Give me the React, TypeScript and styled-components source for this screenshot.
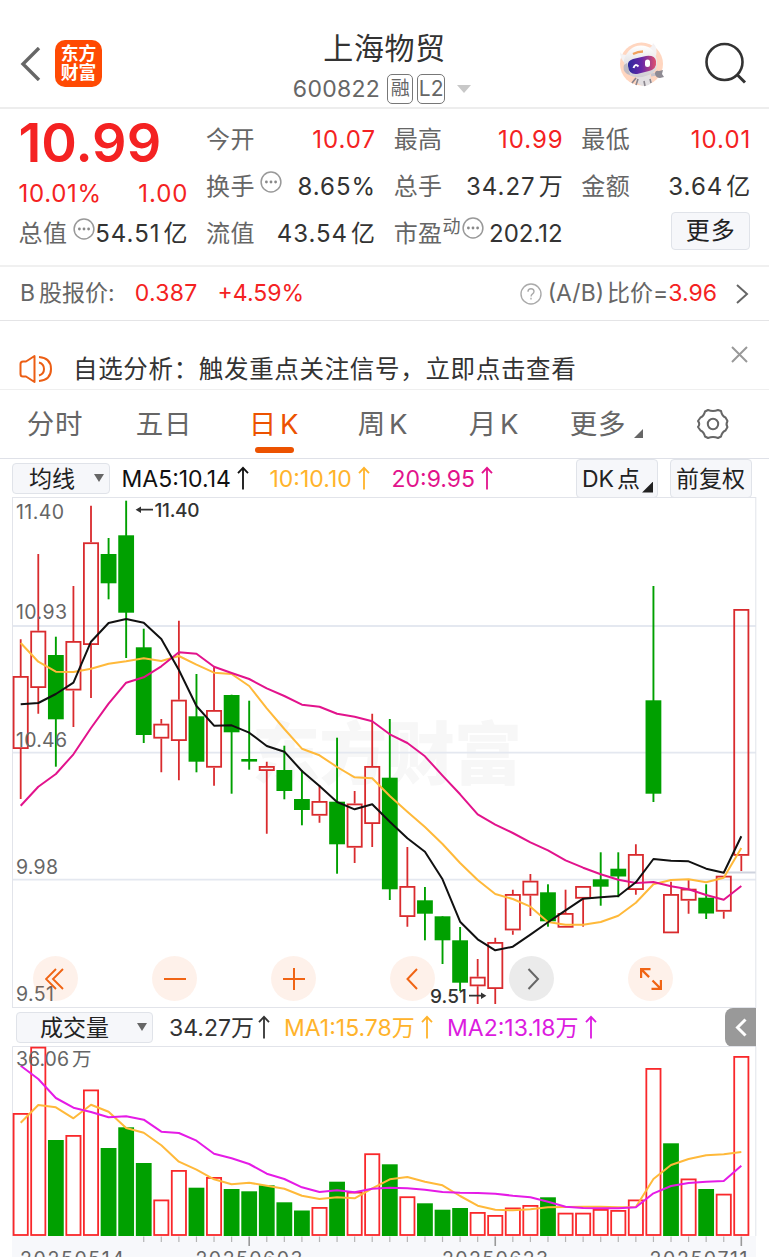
import styled, { createGlobalStyle } from 'styled-components'

const GlobalStyle = createGlobalStyle`
  * {
    box-sizing: border-box;
  }

  body {
    margin: 0;
    background: #fff;
    color: #333;
    font-family: Inter, 'Noto Sans CJK SC', sans-serif;
    overflow: hidden;
  }
`

const Page = styled.div`
  width: 769px;
  height: 1257px;
  overflow: hidden;
  display: flex;
  flex-direction: column;
`

const Text = styled.span<{ $size?: number; $color?: string; $weight?: number; $gap?: number }>`
  font-size: ${({ $size }) => $size ?? 24}px;
  color: ${({ $color }) => $color ?? '#333'};
  font-weight: ${({ $weight }) => $weight ?? 400};
  letter-spacing: ${({ $gap }) => $gap ?? 0}px;
  line-height: 1;
  white-space: nowrap;
`

// quote numbers, the trailing letter space is pulled back so they end on the column edge
const Value = styled.span<{ $up?: boolean }>`
  font-size: 24px;
  letter-spacing: 1px;
  margin-right: -1px;
  line-height: 1;
  white-space: nowrap;
  color: ${({ $up }) => ($up ? '#f42222' : '#333')};
`

// small break between latin and chinese glyphs
const Thin = styled.span<{ $w?: number }>`
  margin-left: ${({ $w }) => $w ?? 3}px;
`

/* header */

const Header = styled.header`
  height: 109px;
  flex: none;
  display: grid;
  grid-template-columns: 250px 1fr 250px;
  padding-top: 30px;
  border-bottom: 2px solid #ededed;
`

const HeaderLeft = styled.div`
  display: flex;
  align-items: flex-start;
  padding: 10px 0 0 20px;
  gap: 14px;

  svg {
    margin-top: 7px;
  }
`

const Logo = styled.div`
  width: 47px;
  height: 47px;
  border-radius: 10px;
  background: #ff4a03;
  color: #fff;
  font-size: 17.8px;
  font-weight: 700;
  line-height: 19px;
  text-align: center;
  padding-top: 4px;
`

const HeaderTitle = styled.div`
  display: flex;
  flex-direction: column;
  align-items: center;
  padding-top: 3px;
`

const CodeRow = styled.div`
  display: flex;
  align-items: center;
  height: 30px;
  margin-top: 11px;
  margin-left: -5px;
`

const Badge = styled.span`
  height: 30px;
  width: ${({ children }) => (children === 'L2' ? 28 : 26)}px;
  border: 1.5px solid #777;
  border-radius: 5px;
  color: #666;
  font-size: ${({ children }) => (children === 'L2' ? 21 : 19)}px;
  line-height: 28px;
  text-align: center;
  margin-left: 4px;
`

const DownTriangle = styled.i<{ $w: number; $h: number; $color: string }>`
  border: ${({ $w }) => $w / 2}px solid transparent;
  border-top: ${({ $h, $color }) => `${$h}px solid ${$color}`};
  border-bottom: 0;
`

const HeaderRight = styled.div`
  display: flex;
  justify-content: flex-end;
  align-items: flex-start;
  padding: 11px 22px 0 0;
  gap: 38px;
`

/* quote */

const Quote = styled.section`
  height: 158px;
  flex: none;
  display: grid;
  grid-template-columns: repeat(4, 169px);
  column-gap: 18.6px;
  padding: 8px 0 0 18.5px;
  border-bottom: 2px solid #f0f0f0;
`

const Column = styled.div`
  display: flex;
  flex-direction: column;
`

const Cell = styled.div<{ $height?: number }>`
  height: ${({ $height }) => $height ?? 46.7}px;
  flex: none;
  display: flex;
  align-items: center;
  justify-content: space-between;
`

const Label = styled.span`
  display: flex;
  align-items: center;
  font-size: 24px;
  letter-spacing: 0.4px;
  line-height: 1;
  color: #666;

  svg {
    margin: -11px 0 0 5.5px;
  }
`

const Sup = styled.sup`
  font-size: 18px;
  line-height: 1;
  margin-top: -14px;
  vertical-align: baseline;

  & + svg {
    margin-left: 1.5px;
  }
`

const MoreButton = styled.button`
  width: 79px;
  height: 38px;
  margin: 0 0 5px auto;
  border: 1.5px solid #e0e3e9;
  border-radius: 4px;
  background: #f6f7fa;
  color: #222;
  font: 24px Inter, 'Noto Sans CJK SC', sans-serif;
  letter-spacing: 1px;
  line-height: 34px;
  padding: 0;
`

/* rows under the quote */

const ShareRow = styled.div`
  height: 54px;
  flex: none;
  display: flex;
  align-items: center;
  padding: 0 20px;
  border-bottom: 1px solid #e4e4e6;
`

const Spacer = styled.div`
  flex: 1;
`

const Notice = styled.div`
  height: 69px;
  flex: none;
  display: flex;
  align-items: flex-start;
  padding: 25px 21px 0 19px;
  border-bottom: 1.5px solid #efefef;

  ${Text} {
    margin: 11px 0 0 21px;
  }
`

const Tabs = styled.nav`
  height: 69px;
  flex: none;
  display: flex;
  border-bottom: 1.5px solid #dfe1e8;
`

const Tab = styled.div<{ $left: number; $active?: boolean }>`
  width: 56px;
  margin-left: ${({ $left }) => $left}px;
  display: flex;
  flex-direction: column;
  align-items: center;
  padding-top: 21px;
  font-size: 27.5px;
  letter-spacing: 0.8px;
  line-height: 27px;
  white-space: nowrap;
  color: ${({ $active }) => ($active ? '#ec5200' : '#666')};

  &:after {
    content: '';
    width: 39px;
    height: 6px;
    margin-top: 9px;
    border-radius: 3px;
    background: ${({ $active }) => ($active ? '#ec5200' : 'transparent')};
  }
`

const Corner = styled.i<{ $size: number; $color: string }>`
  width: ${({ $size }) => $size}px;
  height: ${({ $size }) => $size}px;
  background: ${({ $color }) => $color};
  clip-path: polygon(100% 0, 100% 100%, 0 100%);
`

/* indicator bars */

const IndicatorBar = styled.div<{ $pad: number }>`
  height: 38px;
  flex: none;
  display: flex;
  align-items: center;
  padding-left: ${({ $pad }) => $pad}px;

  ${Text} {
    padding-top: 2px;
  }
`

const Select = styled.div<{ $width: number; $pad: number }>`
  width: ${({ $width }) => $width}px;
  height: 31px;
  padding: 0 5px 0 ${({ $pad }) => $pad}px;
  margin-right: 11.5px;
  display: flex;
  align-items: center;
  justify-content: space-between;
  border: 1.5px solid #e0e3e9;
  border-radius: 4px;
  background: #f6f7fa;
`

const Legend = styled.div<{ $width: number }>`
  width: ${({ $width }) => $width}px;
  display: flex;
  align-items: center;
  gap: 6px;
`

const Chip = styled.div<{ $width: number }>`
  width: ${({ $width }) => $width}px;
  height: 39px;
  margin-right: 12px;
  padding-left: 5px;
  display: flex;
  align-items: center;
  border: 1.5px solid #e0e3e9;
  border-radius: 4px;
  background: #f6f7fa;

  ${Corner} {
    align-self: flex-end;
    margin: 0 0 4px 2px;
  }
`

const Drawer = styled.div`
  width: 31px;
  height: 39px;
  margin-left: auto;
  margin-right: 13px;
  border-radius: 8px 0 0 8px;
  background: #999;
  display: flex;
  align-items: center;
  justify-content: center;
`

/* charts */

const ChartBox = styled.div<{ $height: number }>`
  position: relative;
  height: ${({ $height }) => $height}px;
  flex: none;
  padding-left: 12px;

  svg {
    display: block;
  }
`

const Controls = styled.div`
  position: absolute;
  left: 33px;
  bottom: 7px;
  display: flex;
  gap: 74.1px;
`

const RoundButton = styled.div<{ $muted?: boolean }>`
  width: 45px;
  height: 45px;
  border-radius: 50%;
  display: flex;
  align-items: center;
  justify-content: center;
  color: ${({ $muted }) => ($muted ? '#666' : '#f06414')};
  background: ${({ $muted }) => ($muted ? 'rgba(90, 90, 90, 0.12)' : 'rgba(248, 100, 20, 0.09)')};
`

const UpArrow = ({ color }: { color: string }) => (
  <svg width="12" height="24" viewBox="0 0 12 24" fill="none" stroke={color} strokeWidth="1.8">
    <path d="M6 23.500V2M1 7.200 6 1.800l5 5.400" />
  </svg>
)

const Dots = () => (
  <svg width="22" height="22" viewBox="0 0 22 22" fill="none" stroke="#999" strokeWidth="1.5">
    <circle cx="11" cy="11" r="9.9" />
    <g fill="#888" stroke="none">
      <circle cx="6.4" cy="11" r="1.4" />
      <circle cx="11" cy="11" r="1.4" />
      <circle cx="15.6" cy="11" r="1.4" />
    </g>
  </svg>
)

const Robot = () => (
  <svg width="46" height="46" viewBox="0 0 46 46">
    <defs>
      <linearGradient id="visor" x1="0" y1="0" x2="1" y2="0">
        <stop offset="0" stopColor="#2b2a9c" />
        <stop offset="0.5" stopColor="#6a27a8" />
        <stop offset="1" stopColor="#e0506c" />
      </linearGradient>
      <linearGradient id="shell" x1="0" y1="0" x2="0" y2="1">
        <stop offset="0" stopColor="#ffffff" />
        <stop offset="1" stopColor="#cfcdd2" />
      </linearGradient>
    </defs>
    <circle cx="22.500" cy="23" r="21.5" fill="#ffd6c0" />
    <path d="M18 35l-1 5q4 5 8 5 5 0 8-4l-2-7z" fill="#e2dfe2" />
    <path d="M17 37l-4 5M19 38l-2 6M25 40l1 5M31 38l1 4" stroke="#8a858d" strokeWidth="1.6" />
    <path d="M32 34l6-1" stroke="#c9c5cc" strokeWidth="3" />
    <path d="M36 33q0-4 4-3l4-1-1 4 2 3-4 1q-4 0-5-4z" fill="#8f8b93" />
    <path d="M29 7q4 0 5-5 5 5 3 13zM8 14Q2 14 1 11q0 7 5 11z" fill="#f4f2f4" />
    <path d="M5 19Q9 5 22 4.500q13 0 16 15 1 11-7 14-12 5-20 1-6-4-6-15.500z" fill="url(#shell)" />
    <path d="M5 24q-2 5 3 9l3 1-3-12z" fill="#bdbac3" />
    <path d="M9 25q-1-5 5-7l13-3q9-1 10 5 1 8-7 10l-12 3q-8 1-9-8z" fill="url(#visor)" />
    <path d="M14.500 27q1.500-5 5-1.500" stroke="#fff" strokeWidth="2" fill="none" />
    <rect x="26" y="18.500" width="5" height="7.5" rx="2.5" fill="#fff" />
    <path d="M14 13q5-2.500 10-2.500" stroke="#f0a15e" strokeWidth="2.4" fill="none" />
  </svg>
)

const X0 = 20.7
const STEP = 17.576
const xAt = (i: number) => X0 + i * STEP

// [up, high, body top, body bottom, low]
const candles: [number, number, number, number, number][] = [
  [1, 639.3, 676, 749, 799], [1, 554, 630.7, 688, 713.7], [0, 636.7, 655, 719.3, 766.7],
  [1, 586, 641, 690.5, 727], [1, 505.7, 542.3, 645, 698], [0, 538, 554, 583.3, 599.3],
  [0, 500.7, 535.3, 612.7, 658], [0, 628.7, 647.3, 735, 743], [1, 719, 723.7, 738.6, 772.3],
  [1, 620.7, 699.7, 741, 780.3], [0, 674, 716.3, 761.7, 772.3], [1, 666.7, 710, 767.7, 785.7],
  [0, 694.7, 695, 732.3, 793.7], [0, 700.7, 759, 761.6, 769.7], [1, 761.7, 766, 771, 833.7],
  [0, 745.7, 770, 791, 799.3], [0, 770, 799, 810, 825.3], [1, 785.3, 801, 815.7, 822.7],
  [0, 737.7, 801.7, 844.3, 873.7], [1, 791, 803.5, 847.7, 863], [1, 713.7, 766, 824, 847],
  [0, 719, 777.7, 889.3, 900], [1, 847, 886, 917, 926.7], [0, 887, 900.3, 913.7, 940.3],
  [0, 916.3, 916.3, 940.3, 964], [0, 927, 940.3, 982.7, 991], [1, 959, 976.7, 986.3, 1004],
  [1, 937.7, 942, 989, 1004], [1, 889.7, 894, 930.4, 934.7], [1, 874, 880.7, 895.6, 916],
  [0, 884.3, 892.3, 921.3, 926.7], [1, 889.7, 913, 927.7, 927.7], [1, 886, 886, 898.7, 926.7],
  [0, 852.3, 879.3, 886.7, 905.7], [0, 852.3, 868.7, 876.5, 897.3], [1, 844.3, 854, 890, 894.7],
  [0, 586, 700.3, 793.7, 802], [1, 881.7, 894, 933.3, 933.3], [1, 880, 888.7, 900.7, 913.7],
  [0, 884.3, 897.7, 913.5, 919], [1, 875.7, 875.7, 911.7, 918.7], [1, 609, 609, 855.8, 871],
]

const ma5 = [
  704.3, 703, 694, 682.7, 641.7, 623, 619, 622.7, 639, 670, 706, 725.7, 725.3, 732.7, 746, 751.7, 771, 786, 802,
  809.3, 804.3, 821.7, 838.3, 851.7, 879.3, 921.7, 939.3, 950.3, 946.7, 934.7, 922.3, 910.3, 898.7, 897.3, 896,
  882.3, 859, 860.7, 861.3, 868.7, 872.7, 836.3,
]
const ma10 = [
  643, 661.7, 671.7, 672, 668.7, 663.7, 661.3, 658.3, 661, 656, 664.7, 672.7, 674, 686, 708.3, 729, 748.7, 755.3,
  767, 777.3, 778.3, 796, 811.7, 827, 844, 863, 880, 894, 899, 906.7, 922, 924.7, 924.7, 922, 915.7, 902.7, 884.3,
  880, 879.3, 882.3, 877.7, 848,
]
const ma20 = [
  805.7, 786.7, 774, 754.3, 728, 703.7, 682.7, 677.3, 666.3, 652.3, 653.7, 666.7, 673, 679, 688.3, 696, 704.7,
  706.7, 713.7, 716.7, 721.3, 734.3, 743, 756.3, 775.7, 794.3, 814.3, 824.7, 833, 842.3, 850.3, 860.3, 867.7,
  874.3, 879.7, 883, 882, 886.3, 889.3, 895, 899.7, 886,
]

// [up, bar top]
const volumes: [number, number][] = [
  [1, 1113], [1, 1046.7], [0, 1140], [1, 1135], [1, 1089.5], [0, 1148], [0, 1127.3], [0, 1163], [1, 1199.5],
  [1, 1170], [0, 1187.7], [1, 1177], [0, 1189], [0, 1191.3], [0, 1185.3], [0, 1202.3], [0, 1210.5], [1, 1207],
  [0, 1181.7], [1, 1191.7], [1, 1153.3], [0, 1164.3], [1, 1196.3], [0, 1203.3], [0, 1209.7], [0, 1208],
  [1, 1212], [1, 1215], [1, 1207.5], [1, 1205], [0, 1197.3], [1, 1212.7], [1, 1212.7], [1, 1209], [1, 1210],
  [1, 1199.5], [1, 1068], [0, 1143.3], [1, 1178.5], [0, 1189], [1, 1193.7], [1, 1056],
]
const volMa1 = [
  1122.7, 1105, 1107.3, 1118.3, 1104.7, 1111.7, 1128, 1132.7, 1145.3, 1161.7, 1169.7, 1179.3, 1184.3, 1182.7,
  1185.7, 1188.7, 1195.7, 1199, 1197.3, 1198.3, 1188.3, 1179.3, 1177, 1181.7, 1185.3, 1196, 1205.7, 1209.7,
  1210.3, 1209.3, 1207.3, 1207, 1206.7, 1206.7, 1207.3, 1207, 1179, 1165, 1159, 1155.3, 1154.3, 1152,
]
const volMa2 = [
  1065.7, 1079, 1098, 1107.7, 1112, 1117.3, 1116.3, 1119.7, 1131.7, 1133, 1140.7, 1153.7, 1158.3, 1164, 1173.7,
  1179, 1187.3, 1192, 1190.3, 1192.3, 1188.7, 1187.7, 1188.3, 1189.7, 1192, 1192.7, 1193, 1193.7, 1195.7, 1197.3,
  1201.7, 1206.7, 1208, 1208.3, 1208.3, 1207.3, 1193.3, 1186, 1183, 1181.7, 1181, 1165.7,
]

const GREEN = '#00a000'
const RED = '#f42222'
const ORANGE = '#ffb32b'

const Line = ({ data, color }: { data: number[]; color: string }) => (
  <polyline
    points={data.map((y, i) => `${xAt(i)},${y}`).join(' ')}
    fill="none"
    stroke={color}
    strokeWidth="2"
    strokeLinejoin="round"
  />
)

const CandleChart = () => (
  <svg width="745" height="511" viewBox="12 497 745 511">
    <text x="252" y="779" fontSize="68" fontWeight="900" fill="#f7f7f7" textLength="270">东方财富</text>
    <path d="M12.5 626H756M12.5 752.7H756M12.5 879.7H756" stroke="#e4e8f0" strokeWidth="1.8" />
    <path d="M726 872.5H756" stroke="#cfd3de" strokeWidth="2" />
    <rect x="12.5" y="497.5" width="743.3" height="510" fill="none" stroke="#e2e4ea" />
    {candles.map(([up, high, top, bottom, low], i) => {
      const x = xAt(i)
      return up ? (
        <g key={i} stroke="#d92b2e" strokeWidth="1.8" fill="none">
          <path d={`M${x} ${high}V${top}M${x} ${bottom}V${low}`} />
          <rect x={x - 7.1} y={top + 0.9} width="14.2" height={bottom - top - 1.8} />
        </g>
      ) : (
        <g key={i} fill={GREEN}>
          <rect x={x - 0.95} y={high} width="1.9" height={low - high} />
          <rect x={x - 7.9} y={top} width="15.8" height={bottom - top} />
        </g>
      )
    })}
    <Line data={ma10} color="#ffb93a" />
    <Line data={ma20} color="#e2138c" />
    <Line data={ma5} color="#111" />
    <g fill="#666" fontSize="19.5">
      <text x="16" y="519" textLength="48">11.40</text>
      <text x="16" y="619" textLength="51">10.93</text>
      <text x="16" y="746.5" textLength="51">10.46</text>
      <text x="16" y="873.5" textLength="42">9.98</text>
      <text x="16" y="1001" textLength="38">9.51</text>
    </g>
    <g fill="#333" fontSize="19" fontWeight="500">
      <text x="154.500" y="516.5" textLength="45">11.40</text>
      <text x="430" y="1003" textLength="37">9.51</text>
      <path d="M153 509.7H138M469 995.7H483" stroke="#333" strokeWidth="1.8" fill="none" />
      <path d="M141 506.5v6.4l-5.4-3.2zM481 992.5v6.4l5.4-3.2z" />
    </g>
  </svg>
)

const VolumeChart = () => (
  <svg width="745" height="211" viewBox="12 1046 745 211">
    <rect x="12" y="1236" width="744" height="21" fill="#f7f8fb" />
    <path d="M12.5 1236V1046.5H755.8V1236" fill="none" stroke="#e2e4ea" />
    {volumes.map(([up, top], i) => {
      const x = xAt(i)
      return up ? (
        <rect
          key={i}
          x={x - 7.1}
          y={top + 0.9}
          width="14.2"
          height={1235.9 - top - 1.8}
          fill="none"
          stroke="#f9282b"
          strokeWidth="1.8"
        />
      ) : (
        <rect key={i} x={x - 7.9} y={top} width="15.8" height={1236 - top} fill={GREEN} />
      )
    })}
    <Line data={volMa1} color="#ffb93a" />
    <Line data={volMa2} color="#e51be6" />
    {volumes.map((_, i) =>
      i < 7 ? null : (
        <path
          key={i}
          d={`M${xAt(i)} 1236.5V${i % 14 === 13 ? 1246 : 1242}`}
          stroke={i % 14 === 13 ? '#999' : '#b5b5b5'}
          strokeWidth={i % 14 === 13 ? 1.6 : 1.2}
        />
      ),
    )}
    <g fill="#666" fontSize="19.5">
      <text x="16" y="1065.5">
        36.06<tspan dx="3">万</tspan>
      </text>
      <text x="20" y="1266" textLength="104">20250514</text>
      <text x="195.5" y="1266" textLength="107">20250603</text>
      <text x="442" y="1266" textLength="106">20250623</text>
      <text x="649.5" y="1266" textLength="98">20250711</text>
    </g>
  </svg>
)

function App() {
  return (
    <Page>
      <GlobalStyle />
      <Header>
        <HeaderLeft>
          <svg width="21" height="34" viewBox="0 0 21 34" fill="none" stroke="#666" strokeWidth="3.4">
            <path d="M19 1 3 17l16 16" />
          </svg>
          <Logo>
            东方
            <br />
            财富
          </Logo>
        </HeaderLeft>
        <HeaderTitle>
          <Text $size={30} $gap={0.6}>上海物贸</Text>
          <CodeRow>
            <Text $size={23} $color="#666" $gap={0.3}>600822</Text>
            <Badge style={{ marginLeft: 7 }}>融</Badge>
            <Badge>L2</Badge>
            <DownTriangle $w={14} $h={8} $color="#c8c8c8" style={{ marginLeft: 12 }} />
          </CodeRow>
        </HeaderTitle>
        <HeaderRight>
          <Robot />
          <svg width="44" height="44" viewBox="0 0 44 44" fill="none" stroke="#333" strokeWidth="2.6">
            <circle cx="21.500" cy="21" r="18" />
            <path d="M34 33.5 42 41.5" strokeWidth="3" />
          </svg>
        </HeaderRight>
      </Header>

      <Quote>
        <Column>
          <Cell $height={52}>
            <Text $size={54} $weight={600} $color={RED}>10.99</Text>
          </Cell>
          <Cell $height={49}>
            <Text $color={RED} $gap={0.7}>10.01%</Text>
            <Value $up>1.00</Value>
          </Cell>
          <Cell $height={32}>
            <Label>总值<Dots /></Label>
            <Value>54.51<Thin>亿</Thin></Value>
          </Cell>
        </Column>
        <Column>
          <Cell><Label>今开</Label><Value $up>10.07</Value></Cell>
          <Cell><Label>换手<Dots /></Label><Value>8.65%</Value></Cell>
          <Cell><Label>流值</Label><Value>43.54<Thin>亿</Thin></Value></Cell>
        </Column>
        <Column>
          <Cell><Label>最高</Label><Value $up>10.99</Value></Cell>
          <Cell><Label>总手</Label><Value>34.27<Thin>万</Thin></Value></Cell>
          <Cell><Label>市盈<Sup>动</Sup><Dots /></Label><Text>202.12</Text></Cell>
        </Column>
        <Column>
          <Cell><Label>最低</Label><Value $up>10.01</Value></Cell>
          <Cell><Label>金额</Label><Value>3.64<Thin>亿</Thin></Value></Cell>
          <Cell><MoreButton>更多</MoreButton></Cell>
        </Column>
      </Quote>

      <ShareRow>
        <Text $size={23} $color="#666">B<Thin $w={4}>股报价:</Thin></Text>
        <Text $size={23} $color={RED} $gap={0.3} style={{ marginLeft: 20 }}>0.387</Text>
        <Text $size={23} $color={RED} style={{ marginLeft: 20 }}>+4.59%</Text>
        <Spacer />
        <svg width="22" height="22" viewBox="0 0 22 22" fill="none" stroke="#aaa" strokeWidth="1.4">
          <circle cx="11" cy="11" r="10" />
          <path d="M8 8.8q0-3 3-3t3 2.8q0 1.5-1.7 2.5-1.2.8-1.2 2.3M11 14.8v1.8" />
        </svg>
        <Text $size={23} $color="#666" style={{ marginLeft: 6 }}>(A/B)<Thin>比价=</Thin></Text>
        <Text $size={23} $color={RED}>3.96</Text>
        <svg width="14" height="20" viewBox="0 0 14 20" fill="none" stroke="#666" strokeWidth="2" style={{ marginLeft: 18 }}>
          <path d="m2 1 10 9L2 19" />
        </svg>
      </ShareRow>

      <Notice>
        <svg width="33" height="30" viewBox="0 0 33 30" fill="none" stroke="#ec5e14" strokeWidth="2" style={{ marginTop: 8 }}>
          <path d="M15.5 2v26L7 22.5H4q-2.500 0-2.500-2.500V10q0-2.500 2.500-2.500h3z" strokeLinejoin="round" />
          <path d="M20 8.500q5 1.500 5 6.500t-5 6.500M20 3q12 1 12 12T20 27" />
        </svg>
        <Text $size={24.5} $gap={0.67}>自选分析：触发重点关注信号，立即点击查看</Text>
        <Spacer />
        <svg width="17" height="17" viewBox="0 0 17 17" stroke="#999" strokeWidth="2">
          <path d="m1 1 15 15M16 1 1 16" />
        </svg>
      </Notice>

      <Tabs>
        <Tab $left={27}>分时</Tab>
        <Tab $left={53}>五日</Tab>
        <Tab $left={54} $active><span>日<Thin>K</Thin></span></Tab>
        <Tab $left={53}><span>周<Thin>K</Thin></span></Tab>
        <Tab $left={55}><span>月<Thin>K</Thin></span></Tab>
        <Tab $left={48}>更多</Tab>
        <Corner $size={9} $color="#666" style={{ margin: '39px 0 0 8px' }} />
        <svg width="34" height="34" viewBox="0 0 34 34" fill="none" stroke="#666" strokeWidth="2" style={{ margin: '17px 0 0 53px' }}>
          <path
            d="M12 3Q17 5 22 3l3 1q1 5 4.500 6.500l2 3.500q-2 3.500 0 6l-2 3.500Q26 25 25 29.500l-3 1.500q-5-2-10 0l-3-1.500Q8 25 4.500 23.500L2 20q2.500-3 0-6l2.500-3.500Q8 9 9 4.500z"
            strokeLinejoin="round"
          />
          <circle cx="17" cy="17" r="5.200" />
        </svg>
      </Tabs>

      <IndicatorBar $pad={12}>
        <Select $width={98} $pad={16}>
          <Text $size={23} $color="#222">均线</Text>
          <DownTriangle $w={10} $h={8} $color="#666" />
        </Select>
        <Legend $width={148}>
          <Text $size={23} $color="#111">MA5:10.14</Text>
          <UpArrow color="#111" />
        </Legend>
        <Legend $width={122}>
          <Text $size={23} $color={ORANGE}>10:10.10</Text>
          <UpArrow color={ORANGE} />
        </Legend>
        <Legend $width={106}>
          <Text $size={23} $color="#e2138c">20:9.95</Text>
          <UpArrow color="#e2138c" />
        </Legend>
        <Spacer />
        <Chip $width={82}>
          <Text $size={23} $color="#222">DK<Thin>点</Thin></Text>
          <Corner $size={11} $color="#222" />
        </Chip>
        <Chip $width={82} style={{ marginRight: 17 }}>
          <Text $size={23} $color="#222">前复权</Text>
        </Chip>
      </IndicatorBar>

      <ChartBox $height={511}>
        <CandleChart />
        <Controls>
          <RoundButton>
            <svg width="22" height="22" viewBox="0 0 22 22" fill="none" stroke="currentColor" strokeWidth="1.9">
              <path d="M11 1 1 11l10 10M18 1 8 11l10 10" />
            </svg>
          </RoundButton>
          <RoundButton>
            <svg width="22" height="22" viewBox="0 0 22 22" stroke="currentColor" strokeWidth="2">
              <path d="M0 11h22" />
            </svg>
          </RoundButton>
          <RoundButton>
            <svg width="22" height="22" viewBox="0 0 22 22" stroke="currentColor" strokeWidth="2">
              <path d="M0 11h22M11 0v22" />
            </svg>
          </RoundButton>
          <RoundButton>
            <svg width="22" height="22" viewBox="0 0 22 22" fill="none" stroke="currentColor" strokeWidth="2">
              <path d="M15 1 5.500 11 15 21" />
            </svg>
          </RoundButton>
          <RoundButton $muted>
            <svg width="22" height="22" viewBox="0 0 22 22" fill="none" stroke="currentColor" strokeWidth="2">
              <path d="m7.500 1 9.500 10-9.500 10" />
            </svg>
          </RoundButton>
          <RoundButton>
            <svg width="22" height="22" viewBox="0 0 22 22" fill="none" stroke="currentColor" strokeWidth="2.200">
              <path d="M10.500 1.100H1.100v9M1.100 1.100l8 8M20.900 12v8.900h-9.400M12.500 12.500l8.400 8.400" />
            </svg>
          </RoundButton>
        </Controls>
      </ChartBox>

      <IndicatorBar $pad={16}>
        <Select $width={137} $pad={23} style={{ marginRight: 16 }}>
          <Text $size={23} $color="#222">成交量</Text>
          <DownTriangle $w={10} $h={8} $color="#666" />
        </Select>
        <Legend $width={115} style={{ gap: 4 }}>
          <Text $size={23}>34.27万</Text>
          <UpArrow color="#333" />
        </Legend>
        <Legend $width={163}>
          <Text $size={23} $color={ORANGE}>MA1:15.78万</Text>
          <UpArrow color={ORANGE} />
        </Legend>
        <Legend $width={160}>
          <Text $size={23} $color="#dc1be0">MA2:13.18万</Text>
          <UpArrow color="#dc1be0" />
        </Legend>
        <Drawer>
          <svg width="12" height="19" viewBox="0 0 12 19" fill="none" stroke="#fff" strokeWidth="3">
            <path d="m10.500 1.500-8 8 8 8" />
          </svg>
        </Drawer>
      </IndicatorBar>

      <ChartBox $height={211}>
        <VolumeChart />
      </ChartBox>
    </Page>
  )
}

export default App
